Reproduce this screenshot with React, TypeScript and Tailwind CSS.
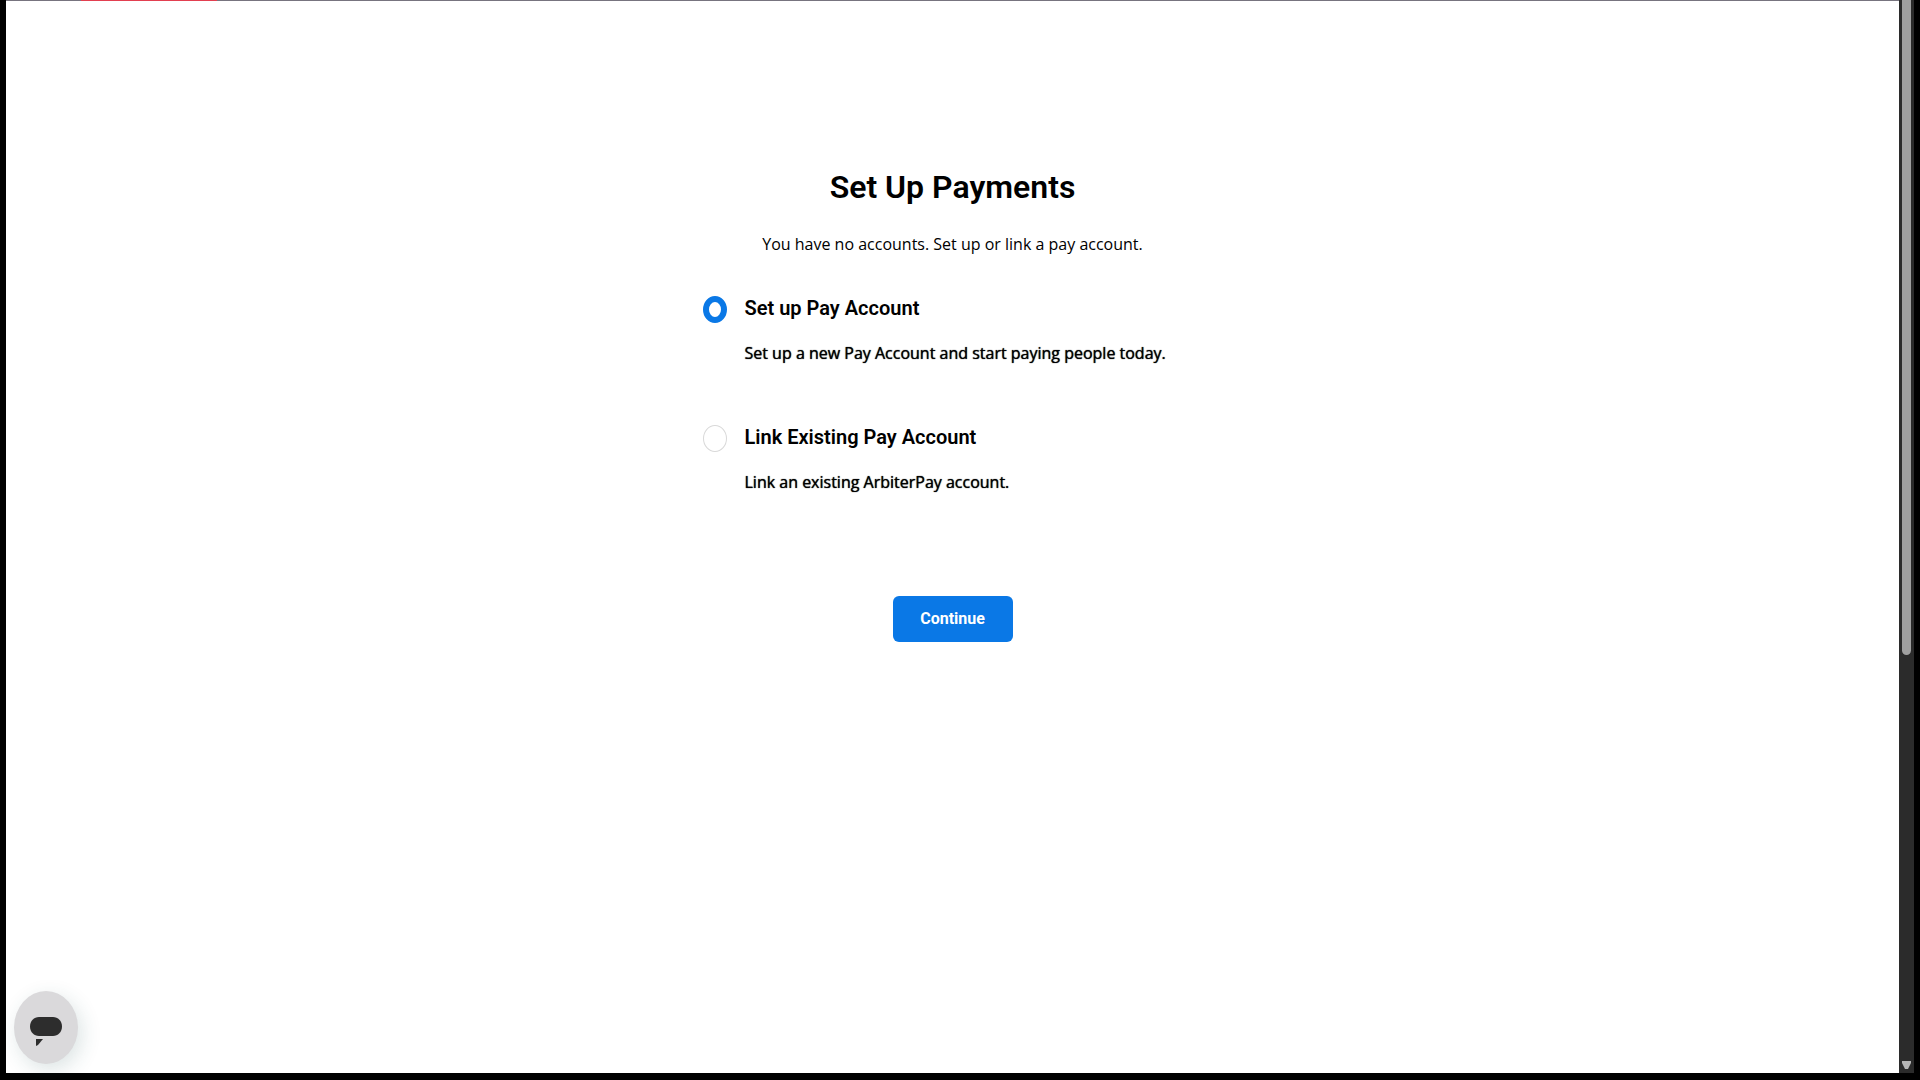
import React, { useState } from 'react';

const OPTIONS = [
  {
    id: 'setup',
    title: 'Set up Pay Account',
    description: 'Set up a new Pay Account and start paying people today.',
  },
  {
    id: 'link',
    title: 'Link Existing Pay Account',
    description: 'Link an existing ArbiterPay account.',
  },
];

const Scrollbar: React.FC = () => (
  <div className="w-[15px] shrink-0 bg-[#2b2b2b] flex flex-col items-center justify-between" aria-hidden="true">
    <div className="w-[9px] h-[61%] rounded-b-full bg-[#9f9f9f]" />
    <svg className="mb-1" width="9" height="8" viewBox="0 0 9 8" fill="#b4b4b4">
      <path d="M0 0h9v2L6 8H3L0 2z" />
    </svg>
  </div>
);

const ChatButton: React.FC = () => (
  <button
    type="button"
    aria-label="Open chat"
    className="fixed left-[14px] bottom-4 w-16 h-[73px] rounded-[50%] bg-[#dad9db] flex items-center justify-center shadow-[4px_6px_20px_rgba(40,90,90,0.16)]"
  >
    <svg width="32" height="36" viewBox="0 0 32 36" fill="#2d2d2d">
      <path d="M9 7h14c5 0 9 4 9 9.500S28 26 23 26H9c-5 0-9-4-9-9.500S4 7 9 7z" />
      <path d="M6 29h7l-5 6l-2 1z" />
    </svg>
  </button>
);

export default function App() {
  const [selected, setSelected] = useState('setup');

  const handleSubmit = (e: React.FormEvent) => {
    e.preventDefault();
  };

  return (
    <div className="min-h-screen bg-black px-[6px] pb-[7px] flex text-black font-['Open_Sans','Noto_Sans',sans-serif]">
      <div className="flex-1 bg-white flex flex-col">
        {/* Loading bar */}
        <div className="h-px bg-[#77747f] pl-[75px]">
          <div className="w-[136px] h-px bg-[#e23f50]" />
        </div>

        <main className="w-[500px] max-w-full mx-auto pt-[162px] pb-10">
          <h1 className="text-center text-[32px] leading-[48px] font-semibold font-['Roboto',sans-serif]">Set Up Payments</h1>
          <p className="mt-[21px] text-center text-base leading-6">You have no accounts. Set up or link a pay account.</p>

          <form onSubmit={handleSubmit} className="mt-10 flex flex-col">
            <div className="flex flex-col gap-[60px]">
              {OPTIONS.map(option => (
                <div key={option.id} className="flex items-start gap-[18px]">
                  <input
                    type="radio"
                    id={option.id}
                    name="account"
                    checked={selected === option.id}
                    onChange={() => setSelected(option.id)}
                    aria-describedby={`${option.id}-description`}
                    className="appearance-none shrink-0 w-6 h-[27px] rounded-[50%] border border-[#d9d9d9] bg-white checked:border-[6px] checked:border-[#0a78e6]"
                  />
                  <div>
                    <label htmlFor={option.id} className="block text-xl leading-6 font-semibold font-['Roboto',sans-serif]">
                      {option.title}
                    </label>
                    <p id={`${option.id}-description`} className="mt-[21px] text-base leading-6 [text-shadow:0_0_1px_#000]">
                      {option.description}
                    </p>
                  </div>
                </div>
              ))}
            </div>

            <button
              type="submit"
              className="mt-[102px] self-center w-[120px] h-[46px] rounded-md bg-[#0a78e6] text-white text-base font-bold font-['Roboto',sans-serif]"
            >
              Continue
            </button>
          </form>
        </main>
      </div>

      <Scrollbar />
      <ChatButton />
    </div>
  );
}
